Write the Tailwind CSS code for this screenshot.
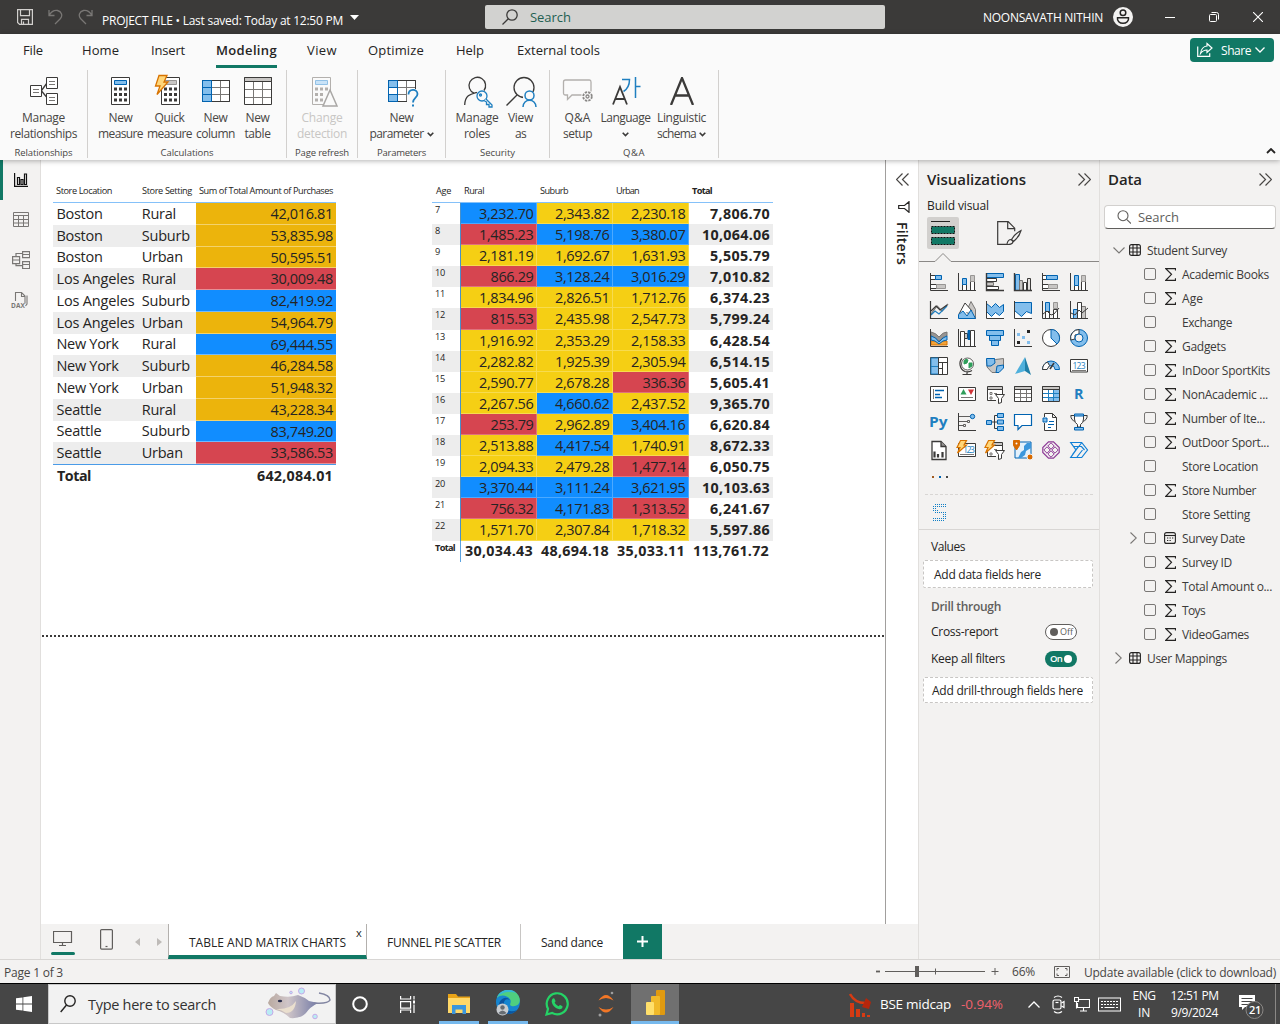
<!DOCTYPE html>
<html lang="en">
<head>
<meta charset="utf-8">
<title>PROJECT FILE</title>
<script src="https://cdn.jsdelivr.net/npm/@tailwindcss/browser@4"></script>
</head>
<body class="w-[1280px] h-[1024px] overflow-hidden flex flex-col bg-white font-['Open_Sans','Noto_Sans',sans-serif] text-[12px] leading-4 text-[#252423] whitespace-nowrap **:shrink-0">

<!-- Title bar -->
<header class="h-[34px] bg-[#3b3a39] flex items-center text-white">
  <svg class="ml-[17px] w-4 h-4" viewBox="0 0 16 16" fill="none" stroke="#d2d0ce" stroke-width="1.2"><path d="M.6.6h14.8v14.8H2.6l-2-2z"/><path d="M3.5.6v6h9v-6M4.500 15.400v-5h7v5M6.500 12.500v3"/></svg>
  <svg class="ml-[15px] w-[15px] h-4" viewBox="0 0 15 16" fill="none" stroke="#797775" stroke-width="1.300"><path d="M1 1v5.500h5.500M1 6.500C3 3 6 1 9.500 1.500c4 .8 5.500 5 3 8L7 15"/></svg>
  <svg class="ml-[15px] w-[15px] h-4" viewBox="0 0 15 16" fill="none" stroke="#797775" stroke-width="1.300"><path d="M14 1v5.500H8.500M14 6.500C12 3 9 1 5.500 1.500c-4 .8-5.500 5-3 8L8 15"/></svg>
  <span data-fit class="ml-[9px] w-[241px] pt-[7px]">PROJECT FILE • Last saved: Today at 12:50 PM</span>
  <svg class="ml-[7px] w-[9px] h-[5px]" viewBox="0 0 9 5"><path d="M0 0h9L4.500 5z" fill="#fff"/></svg>
  <div class="ml-[126px] w-[400px] h-6 bg-[#d2d2d0] rounded-[2px] flex items-center pl-[17px] text-[#1f6052]">
    <svg class="w-4 h-4" viewBox="0 0 16 16" fill="none" stroke="#3b3a39" stroke-width="1.300"><circle cx="10" cy="6" r="5.200"/><path d="M6.300 9.800.5 15.500"/></svg>
    <span data-fit class="ml-3 w-[41px] text-[13px]">Search</span>
  </div>
  <span data-fit class="ml-[98px] w-[120px] pt-px">NOONSAVATH NITHIN</span>
  <svg class="ml-[10px] w-5 h-5" viewBox="0 0 20 20"><circle cx="10" cy="10" r="10" fill="#f3f2f1"/><g fill="none" stroke="#252423" stroke-width="1.500"><circle cx="10" cy="5.700" r="2.800"/><path d="M4.500 10.800h11c.5 3-2 5.500-5.500 5.500s-6-2.500-5.500-5.500z"/></g></svg>
  <svg class="ml-8 w-[10px] h-[10px]" viewBox="0 0 10 10"><path d="M0 5.500h10" stroke="#fff"/></svg>
  <svg class="ml-[34px] w-[10px] h-[10px]" viewBox="0 0 10 10" fill="none" stroke="#fff"><rect x=".5" y="2.500" width="7" height="7" rx="1"/><path d="M2.500.5h5q2 0 2 2v5"/></svg>
  <svg class="ml-[34px] w-[10px] h-[10px]" viewBox="0 0 10 10" stroke="#fff" stroke-width="1.100"><path d="M0 0l10 10M10 0 0 10"/></svg>
</header>

<!-- Ribbon -->
<section class="relative z-10 h-[126px] bg-[#fafafa] flex flex-col shadow-[0_1px_5px_rgba(0,0,0,0.3)]">
  <nav class="h-[34px] pb-[2px] flex items-center text-[13px] text-[#252423]">
    <span data-fit class="ml-[23px] w-[20px]">File</span>
    <span data-fit class="ml-[39px] w-[37px]">Home</span>
    <span data-fit class="ml-[32px] w-[34px]">Insert</span>
    <span class="ml-[31px] w-[61px] h-[31px] mt-[5px] pt-[3px] border-b-[3px] border-[#117865] font-semibold"><span data-fit class="block w-[61px] leading-5">Modeling</span></span>
    <span data-fit class="ml-[30px] w-[30px]">View</span>
    <span data-fit class="ml-[31px] w-[56px]">Optimize</span>
    <span data-fit class="ml-[32px] w-[28px]">Help</span>
    <span data-fit class="ml-[33px] w-[83px]">External tools</span>
    <div class="ml-[590px] w-[84px] h-6 rounded-[4px] bg-[#117865] text-white text-[12px] flex items-center font-medium">
      <svg class="ml-[7px] w-4 h-4" viewBox="0 0 16 16" fill="none" stroke="#fff" stroke-width="1.200"><path d="M.7 4.500v9.800h12v-3"/><path d="M10 1.500l5 4.500-5 4.500V8c-3.500 0-5 1.500-6.500 3.500C4 7.500 6.500 4.200 10 4z"/></svg>
      <span data-fit class="ml-2 w-[30px] pt-px">Share</span>
      <svg class="ml-1 w-[10px] h-[6px]" viewBox="0 0 10 6" fill="none" stroke="#fff" stroke-width="1.300"><path d="M.5.5 5 5 9.500.5"/></svg>
    </div>
  </nav>
  <div class="flex h-[90px] pt-[2px] text-[#484644]">
    <div class="w-[88px] h-[88px] border-r border-[#d2d0ce] flex flex-col items-center">
      <div class="h-[75px] pt-[7px] flex flex-col items-center">
        <svg class="w-7 h-7 mb-[5px]" viewBox="0 0 28 28" fill="#fff" stroke="#3b3a39"><path d="M11.500 13.500 17 6M11.500 14l5.500 6.500" stroke-width="1.300"/><path d="M.5 8.500h11v11H.5zM16.500.5h11v11h-11zM16.500 16.500h11v11h-11z"/><path d="M3 12.500h6M3 15.500h6M19 4.500h6M19 7.500h6M19 20.500h6M19 23.500h6" stroke="#797775"/></svg>
        <span data-fit class="w-[43px]">Manage</span><span data-fit class="w-[67px]">relationships</span>
      </div>
      <span data-fit class="w-[58px] text-[9.500px] leading-4">Relationships</span>
    </div>
    <div class="w-[199px] h-[88px] border-r border-[#d2d0ce] flex flex-col items-center">
      <div class="h-[75px] w-[199px] pl-[9px] pt-[7px] flex gap-[1px]">
        <div class="w-12 flex flex-col items-center">
          <svg class="w-7 h-7 mb-[5px]" viewBox="0 0 28 28" fill="none" stroke="#3b3a39"><path d="M4.500.5h18v27h-18z" fill="#fff"/><path d="M7.500 3.500h12v4h-12z" fill="#83beec" stroke="#0063b1"/><g stroke-width="3" stroke-dasharray="3 2"><path d="M7 12h13M7 17.500h13M7 23h13"/></g></svg>
          <span data-fit class="w-[24px]">New</span><span data-fit class="w-[45px]">measure</span>
        </div>
        <div class="w-12 flex flex-col items-center">
          <svg class="w-7 h-7 mb-[5px] overflow-visible" viewBox="0 0 28 28" fill="none" stroke="#3b3a39"><path d="M5.500.5h18v27h-18z" fill="#fff"/><path d="M8.500 3.500h12v4h-12z" fill="#c8c6c4" stroke="#979593"/><g stroke-width="3" stroke-dasharray="3 2"><path d="M8 12h13M8 17.500h13M8 23h13"/></g><path d="M3-1.500h8L8 5h4L1 17.500 4 9H-.5z" fill="#ffd679" stroke="#d87300" stroke-width="1.300"/></svg>
          <span data-fit class="w-[30px]">Quick</span><span data-fit class="w-[45px]">measure</span>
        </div>
        <div class="w-[42px] flex flex-col items-center">
          <svg class="w-7 h-7 mb-[5px]" viewBox="0 0 28 28" fill="none" stroke="#3b3a39"><path d="M.5 3.500h27v21H.5z" fill="#fff"/><path d="M.5 3.500h9v21h-9z" fill="#83beec"/><path d="M9.500 10.500h18M9.500 17.500h18M18.500 4v20" stroke="#797775"/><path d="M.5 3.500h9v21h-9zM.5 10.500h9M.5 17.500h9" stroke="#0063b1"/><path d="M10 3.500h17.500v21H10"/></svg>
          <span data-fit class="w-[24px]">New</span><span data-fit class="w-[39px]">column</span>
        </div>
        <div class="w-10 flex flex-col items-center">
          <svg class="w-7 h-7 mb-[5px]" viewBox="0 0 28 28" fill="none" stroke="#3b3a39"><path d="M.5.500h27v27H.5z" fill="#fff"/><path d="M.5.500h27v4H.5z" fill="#c8c6c4"/><path d="M1 12.500h26M1 20.500h26M9.500 5v22M18.500 5v22" stroke="#797775"/></svg>
          <span data-fit class="w-[24px]">New</span><span data-fit class="w-[26px]">table</span>
        </div>
      </div>
      <span data-fit class="w-[53px] text-[9.500px]">Calculations</span>
    </div>
    <div class="w-[71px] h-[88px] border-r border-[#d2d0ce] flex flex-col items-center">
      <div class="h-[75px] pt-[7px] flex flex-col items-center text-[#c8c6c4]">
        <svg class="w-7 h-7 mb-[5px] overflow-visible" viewBox="0 0 28 28" fill="none" stroke="#b3b0ad"><path d="M4.500.5h18v27h-18z" fill="#fafafa"/><path d="M7.500 3.500h12v4h-12z" fill="#c9e3f8" stroke="#92c1e6"/><g stroke-width="3" stroke-dasharray="3 2"><path d="M7 12h13M7 17.500h9M7 23h8"/></g><path d="M22 13l7 16H15z" fill="#fafafa" stroke="#a9a7a5" stroke-width="1.500"/></svg>
        <span data-fit class="w-[41px]">Change</span><span data-fit class="w-[50px]">detection</span>
      </div>
      <span data-fit class="w-[54px] text-[9.500px]">Page refresh</span>
    </div>
    <div class="w-[88px] h-[88px] border-r border-[#d2d0ce] flex flex-col items-center">
      <div class="h-[75px] pt-[7px] flex flex-col items-center">
        <svg class="w-7 h-7 mb-[5px] overflow-visible" viewBox="0 0 28 28" fill="none" stroke="#3b3a39"><path d="M.5 3.500h27v21H.5z" fill="#fff"/><path d="M.5 3.500h9v7h-9zM.5 17.500h9v7h-9z" fill="#83beec"/><path d="M9.500 10.500h18M9.500 17.500h18M18.500 4v20" stroke="#797775"/><path d="M.5 3.500h9v21h-9zM.5 10.500h9M.5 17.500h9" stroke="#0063b1"/><path d="M10 3.500h17.500v21H10"/><path d="M19 12h11v18H19z" fill="#fafafa" stroke="none"/><path d="M20.500 17.500c0-6 9-6 9-.5 0 4-4.500 4-4.500 8.500" stroke="#1f7fc0" stroke-width="1.800"/><path d="M24 27.500h2v2h-2z" fill="#1f7fc0" stroke="none"/></svg>
        <span data-fit class="w-[24px]">New</span>
        <span class="flex items-center"><span data-fit class="w-[54px]">parameter</span><svg class="ml-[3px] w-[7px] h-[5px]" viewBox="0 0 7 5" fill="none" stroke="#3b3a39" stroke-width="1.600"><path d="M.7.7l2.800 2.800L6.300.7"/></svg></span>
      </div>
      <span data-fit class="w-[49px] text-[9.500px]">Parameters</span>
    </div>
    <div class="w-[104px] h-[88px] border-r border-[#d2d0ce] flex flex-col items-center">
      <div class="h-[75px] w-[104px] pl-[9px] pt-[7px] flex">
        <div class="w-[45px] flex flex-col items-center">
          <svg class="w-7 h-7 mb-[5px] overflow-visible" viewBox="0 0 28 28" fill="none" stroke="#3b3a39" stroke-width="1.300"><path d="M14 15.300C8 17 2 18 1.700 28M21 13.500a8.300 8.300 0 1 0-10 2.700"/><g stroke="#1f7fc0"><circle cx="19" cy="19" r="5"/><path d="M23 22l6 6v2h-3v-2.500h-2.500V25L21 23.500" fill="#fafafa"/><circle cx="17.500" cy="18" r="1" /></g></svg>
          <span data-fit class="w-[43px]">Manage</span><span data-fit class="w-[26px]">roles</span>
        </div>
        <div class="w-[42px] flex flex-col items-center">
          <svg class="w-8 h-7 mb-[5px] overflow-visible" viewBox="0 0 32 28" fill="none" stroke="#3b3a39" stroke-width="1.300"><circle cx="19" cy="10.500" r="10"/><path d="M12 18 1.500 28.500"/><path d="M18 15h13v15H18z" fill="#fafafa" stroke="none"/><g stroke="#1f7fc0" stroke-width="1.500"><circle cx="24.500" cy="18.500" r="4.500"/><path d="M18 30c0-9 13-9 13 0"/></g></svg>
          <span data-fit class="w-[25px]">View</span><span data-fit class="w-[11px]">as</span>
        </div>
      </div>
      <span data-fit class="w-[35px] text-[9.500px]">Security</span>
    </div>
    <div class="w-[169px] h-[88px] border-r border-[#d2d0ce] flex flex-col items-center">
      <div class="h-[75px] w-[169px] pl-[12px] pt-[7px] flex">
        <div class="w-8 flex flex-col items-center">
          <svg class="w-7 h-7 mb-[5px] overflow-visible" viewBox="0 0 28 28" fill="none" stroke="#b3b0ad" stroke-width="1.300"><path d="M17.500 18H8l-4.500 4.500V18h-2q-2 0-2-2V5q0-2 2-2h24q1.500 0 1.500 2v9.500"/><circle cx="23.500" cy="19.500" r="4.300" stroke="#8a8886" stroke-width="1.800" stroke-dasharray="2.400 1"/><circle cx="23.500" cy="19.500" r="1.500" stroke="#8a8886"/></svg>
          <span data-fit class="w-[26px]">Q&amp;A</span><span data-fit class="w-[29px]">setup</span>
        </div>
        <div class="ml-[7px] w-[50px] flex flex-col items-center">
          <svg class="w-7 h-7 mb-[5px] overflow-visible" viewBox="0 0 28 28" fill="none" stroke="#3b3a39" stroke-width="1.800"><path d="M1 27.500 8 10l7 17.500M3.300 22h9.400"/><path d="M10 2.500h7.500c0 6-2 9.500-6 12M23.500 0v21M24 9.500h4.500" stroke="#1f7fc0" stroke-width="1.500"/></svg>
          <span data-fit class="w-[50px]">Language</span>
          <svg class="mt-[6px] w-[7px] h-[5px]" viewBox="0 0 7 5" fill="none" stroke="#3b3a39" stroke-width="1.600"><path d="M.7.7l2.800 2.800L6.300.7"/></svg>
        </div>
        <div class="ml-[6px] w-[50px] flex flex-col items-center">
          <svg class="w-7 h-7 mb-[5px]" viewBox="0 0 28 28" fill="none" stroke="#3b3a39" stroke-width="2.300"><path d="M3 28 14 1l11 27M7 18.500h14"/></svg>
          <span data-fit class="w-[49px]">Linguistic</span>
          <span class="flex items-center"><span data-fit class="w-[39px]">schema</span><svg class="ml-[3px] w-[7px] h-[5px]" viewBox="0 0 7 5" fill="none" stroke="#3b3a39" stroke-width="1.600"><path d="M.7.7l2.800 2.800L6.300.7"/></svg></span>
        </div>
      </div>
      <span data-fit class="w-[22px] text-[9.500px]">Q&amp;A</span>
    </div>
    <svg class="ml-[547px] mt-[78px] w-[10px] h-[6px]" viewBox="0 0 10 6" fill="none" stroke="#252423" stroke-width="1.800"><path d="M1 5l4-4 4 4"/></svg>
  </div>
</section>

<main class="h-[799px] flex">
  <!-- View switcher -->
  <aside class="w-[41px] bg-[#f3f2f1] border-r border-[#e1dfdd] flex flex-col">
    <div class="h-10 border-l-[3px] border-[#117865] pl-[11px] pt-[13px]"><svg class="w-[14px] h-[14px]" viewBox="0 0 14 14" fill="none" stroke="#111" stroke-width="1.200"><path d="M.6 0v13.400H14M3.500 4.500h2v7h-2zM7 6.500h2v5H7zM10.500 1h2v10.500h-2z"/></svg></div>
    <svg class="ml-[13px] mt-[12px] w-4 h-4" viewBox="0 0 16 16" fill="none" stroke="#797775"><path d="M.5.5h15v14H.5zM.5 3.500h15M.5 7.500h15M.5 11h15M5.500 3.500v11M10.500 3.500v11"/></svg>
    <svg class="ml-3 mt-[23px] w-[18px] h-[18px]" viewBox="0 0 18 18" fill="none" stroke="#797775" stroke-width="1.200"><path d="M.6 5.600h7v7h-7zM.6 9h7M10.600.6h7v6h-7zM10.600 3.500h7M10.600 10.600h7v7h-7zM10.600 13.500h7M4 5.600V2.500h6.500M4 12.600v2h6.500"/></svg>
    <div class="ml-[11px] mt-[23px] w-[18px] h-[17px] grid text-[6.500px] leading-[6px] font-bold text-[#797775]">
      <svg class="col-start-1 row-start-1 ml-[3px] w-[14px] h-[15px]" viewBox="0 0 14 15" fill="none" stroke="#797775" stroke-width="1.100"><path d="M1.500 9V.5h6l3.500 3.500v7.500M7.500.5v4H11M13 3.500V12l-1.500 2"/></svg>
      <span data-fit class="col-start-1 row-start-1 self-end w-[14px]">DAX</span>
    </div>
  </aside>

  <div class="w-[877px] flex flex-col">
    <div class="h-[764px] flex bg-white">
      <!-- Report canvas -->
      <div class="w-[844px]">
        <div class="mx-px h-[477px] border-b-2 border-dotted border-[#3b3a39] pl-[11px] pt-5 flex items-start">
          <div class="w-[284px]">
            <div class="h-[23px] w-[283px] border-b border-[#85c1f9] flex items-center text-[9.200px] text-[#252423]">
              <span data-fit class="ml-[3px] w-[56px]">Store Location</span><span data-fit class="ml-[30px] w-[50px]">Store Setting</span><span data-fit class="ml-[7px] w-[134px]">Sum of Total Amount of Purchases</span>
            </div>
            <div id="purchases" class="w-[283px] text-[14.500px] leading-5"></div>
            <div class="h-[22px] w-[283px] border-t border-[#4a9be8] flex items-center justify-between pl-1 pr-[3px] font-bold text-[14.300px]"><span data-fit class="w-[34px]">Total</span><span data-fit class="w-[76px]">642,084.01</span></div>
          </div>
          <div class="ml-[95px] w-[341px]">
            <div class="h-[23px] border-b border-[#85c1f9] flex items-center text-[9.200px]">
              <span data-fit class="ml-[4px] w-[15px]">Age</span><span data-fit class="ml-[13px] w-[20px]">Rural</span><span data-fit class="ml-[56px] w-[28px]">Suburb</span><span data-fit class="ml-[48px] w-[23px]">Urban</span><span data-fit class="ml-[53px] w-[20px] font-bold">Total</span>
            </div>
            <div id="matrix" class="text-[14.500px] leading-5"></div>
            <div class="h-[21px] flex font-bold text-[14.300px]">
              <span class="w-[28.500px] pl-[3px] border-r border-[#5aa3e0] text-[9.200px] leading-[14px]"><span data-fit class="block w-[20px]">Total</span></span>
              <span data-fit class="ml-[4.500px] mt-[2px] w-[68px]">30,034.43</span><span data-fit class="ml-[8px] mt-[2px] w-[68px]">48,694.18</span><span data-fit class="ml-[8px] mt-[2px] w-[68px]">35,033.11</span><span data-fit class="ml-[8px] mt-[2px] w-[76px]">113,761.72</span>
            </div>
          </div>
        </div>
      </div>
      <!-- Filters (collapsed) -->
      <div class="w-[33px] border-l border-[#a19f9d] flex flex-col">
        <svg class="ml-[10px] mt-[13px] w-[13px] h-[13px]" viewBox="0 0 13 13" fill="none" stroke="#484644" stroke-width="1.200"><path d="M6.500.5l-6 6 6 6M12.500.5l-6 6 6 6"/></svg>
        <svg class="ml-3 mt-[15px] w-3 h-3" viewBox="0 0 12 12" fill="none" stroke="#252423" stroke-width="1.200"><path d="M11 .7v10.600L6.500 7.500H.7v-3h5.800z"/></svg>
        <div class="ml-[6px] mt-[9px] w-5 [writing-mode:vertical-rl] text-[14px] leading-5 font-semibold tracking-[0.200px]">Filters</div>
      </div>
    </div>
    <!-- Page tabs -->
    <div class="h-[35px] bg-[#f3f2f1] flex items-center">
      <div class="ml-[10px] w-6 h-[35px] flex flex-col items-center">
        <svg class="mt-[7px] w-[20px] h-[15px]" viewBox="0 0 20 15" fill="none" stroke="#605e5c"><path d="M.5.500h18v11H.5zM9.500 12v2.500M6 14.500h7" stroke-width="1.200"/></svg>
        <div class="mt-[6px] w-6 h-[3px] bg-[#117865] rounded-sm"></div>
      </div>
      <svg class="ml-[25px] mt-[-5px] w-[13px] h-[21px]" viewBox="0 0 13 21" fill="none" stroke="#605e5c" stroke-width="1.200"><rect x=".6" y=".6" width="11.800" height="19.500" rx="1"/><path d="M5.500 17.500h2"/></svg>
      <svg class="ml-[22px] w-[5px] h-2" viewBox="0 0 5 8"><path d="M5 0v8L0 4z" fill="#bebbb8"/></svg>
      <svg class="ml-[17px] w-[5px] h-2" viewBox="0 0 5 8"><path d="M0 0v8l5-4z" fill="#bebbb8"/></svg>
      <div class="ml-[6px] w-[199px] h-[35px] bg-white border-x border-[#b3b0ad] border-b-[4px] border-b-[#117865] flex pl-5"><span data-fit class="mt-[11px] w-[157px] font-medium">TABLE AND MATRIX CHARTS</span><span class="ml-[10px] mt-[1px] text-[11px] font-medium">x</span></div>
      <div class="w-[154px] h-[35px] bg-white border-r border-[#c8c6c4] flex items-center pl-5"><span data-fit class="mt-[2px] w-[114px]">FUNNEL PIE SCATTER</span></div>
      <div class="w-[102px] h-[35px] bg-white flex items-center pl-5"><span data-fit class="mt-[2px] w-[62px]">Sand dance</span></div>
      <div class="w-[39px] h-[35px] bg-[#117865] flex items-center justify-center"><svg class="w-[11px] h-[11px]" viewBox="0 0 11 11" stroke="#fff" stroke-width="2"><path d="M5.500 0v11M0 5.500h11"/></svg></div>
    </div>
  </div>

  <!-- Visualizations pane -->
  <aside class="w-[181px] border-l border-[#e1dfdd] bg-[#f3f2f1] flex flex-col">
    <div class="mt-[9px] h-5 flex items-center"><span data-fit class="ml-2 w-[99px] text-[15px] leading-5 font-semibold">Visualizations</span><svg class="ml-[52px] w-[13px] h-[13px]" viewBox="0 0 13 13" fill="none" stroke="#484644" stroke-width="1.200"><path d="M.5.500l6 6-6 6M6.500.500l6 6-6 6"/></svg></div>
    <span data-fit class="ml-2 mt-[9px] w-[62px] font-medium">Build visual</span>
    <div class="mt-[3px] h-8 flex">
      <div class="ml-2 w-8 h-8 bg-[#d2d0ce] rounded-[2px] pl-1 pt-1"><svg class="w-6 h-6" viewBox="0 0 24 24" fill="#117865"><path d="M0 .5h19" stroke="#252423"/><g stroke="#111" stroke-dasharray="2 1"><path d="M.5 5.500h23v7H.5zM.5 16.500h23v7H.5z"/></g></svg></div>
      <svg class="ml-[38px] mt-1 w-[25px] h-6" viewBox="0 0 25 24" fill="none" stroke="#3b3a39" stroke-width="1.200"><path d="M8 23.300H.7V.7h10.500l6.500 6.500v3M10.700.7v7h7"/><path d="M24 9.500c-4 2-8 6.500-9.500 9l2 2c3-2.500 6.500-7 7.500-11zM14 18.500c-3 0-3.500 2-4 4.500-1 .5-1.500.3-2 .3 4 .7 8 0 8-3z"/></svg>
    </div>
    <svg class="mt-[3px] w-[180px] h-[11px]" viewBox="0 0 180 11" fill="none" stroke="#8a8886"><path d="M0 9.500h16l8-8 8 8h148"/></svg>

    <div class="ml-[11px] mt-[10px] grid grid-cols-[repeat(6,18px)] gap-[10px] *:w-[18px] *:h-[18px] *:overflow-visible">
      <!-- row 1 -->
      <svg viewBox="0 0 18 18" fill="#fff" stroke="#3b3a39"><path d="M.5 2.500h5v4h-5zM.5 11.500h6v4h-6z"/><path d="M5.500 2.500h6v4h-6z" fill="#83beec" stroke="#0063b1"/><path d="M6.500 11.500h9v4h-9z" fill="#c8c6c4" stroke="#979593"/><path d="M.5 0v17.500H18" fill="none"/></svg>
      <svg viewBox="0 0 18 18" fill="#fff" stroke="#3b3a39"><path d="M4.500 11.500h4v6h-4zM12.500 8.500h4v9h-4z"/><path d="M4.500 5.500h4v6h-4z" fill="#83beec" stroke="#0063b1"/><path d="M12.500 2.500h4v6h-4z" fill="#c8c6c4" stroke="#979593"/><path d="M.5 0v17.500H18" fill="none"/></svg>
      <svg viewBox="0 0 18 18" fill="#fff" stroke="#3b3a39"><path d="M.5.500h17v4H.5z" fill="#83beec" stroke="#0063b1"/><path d="M.5 5.500h10v3H.5z"/><path d="M.5 9.500h7v3h-7z" fill="#c8c6c4" stroke="#797775"/><path d="M.5 13.500h12v3H.5z"/><path d="M.5 0v17.500H18" fill="none" stroke-width="1.400"/></svg>
      <svg viewBox="0 0 18 18" fill="#fff" stroke="#3b3a39"><path d="M1.500 1.500h4v16h-4z" fill="#83beec" stroke="#0063b1"/><path d="M5.500 7.500h3v10h-3z" fill="#c8c6c4" stroke="#797775"/><path d="M9.500 9.500h3v8h-3z"/><path d="M13.500 5.500h3v12h-3z" fill="#e1dfdd"/><path d="M.5 0v17.500H18" fill="none" stroke-width="1.400"/></svg>
      <svg viewBox="0 0 18 18" fill="#fff" stroke="#3b3a39"><path d="M.5 2.500h4v4h-4zM.5 11.500h6v4h-6z"/><path d="M4.500 2.500h11v4h-11z" fill="#83beec" stroke="#0063b1"/><path d="M6.500 11.500h9v4h-9z" fill="#c8c6c4" stroke="#979593"/><path d="M.5 0v17.500H18" fill="none"/></svg>
      <svg viewBox="0 0 18 18" fill="#fff" stroke="#3b3a39"><path d="M4.500 12.500h4v5h-4zM11.500 8.500h4v9h-4z"/><path d="M4.500 2.500h4v10h-4z" fill="#83beec" stroke="#0063b1"/><path d="M11.500 2.500h4v6h-4z" fill="#c8c6c4" stroke="#979593"/><path d="M.5 0v17.500H18" fill="none"/></svg>
      <!-- row 2 -->
      <svg viewBox="0 0 18 18" fill="none" stroke="#3b3a39" stroke-width="1.200"><path d="M1 13 7 5l5 5 6-7" stroke="#797775"/><path d="M1 14l4-4 4 3 8-8" stroke="#1f7fc0"/><path d="M1 10l5-5 4 4 7-5"/><path d="M.5 0v17.500H18"/></svg>
      <svg viewBox="0 0 18 18" fill="#fff" stroke="#797775"><path d="M8 11 13 .5l4.500 8v9z" fill="#c8c6c4"/><path d="M1 13 7 2l7 8" stroke="#3b3a39"/><path d="M.5 17.500v-4L5 10l4 5 4-6 4.500 8.500z" fill="#83beec" stroke="#0063b1"/></svg>
      <svg viewBox="0 0 18 18" fill="#83beec" stroke="#0063b1"><path d="M.5 12v5.500h17V12l-4 3-4-3-4 4z" fill="#fff" stroke="none"/><path d="M.5 2.500l5 4 4-4 4 4 4-3v7l-4 4-4-3-4 4-5-5z"/><path d="M.5 0v17.500H18" fill="none" stroke="#3b3a39"/></svg>
      <svg viewBox="0 0 18 18" stroke="#0063b1"><path d="M1 10v7h16v-6l-4 2-5 3z" fill="#fff" stroke="none"/><path d="M.5 1.500h17v11l-5-2-5 5-7-6z" fill="#83beec"/><path d="M.5 0v17.500H18" fill="none" stroke="#3b3a39"/></svg>
      <svg viewBox="0 0 18 18" fill="#fff" stroke="#3b3a39"><path d="M3.500 1.500h4v10h-4z" fill="#83beec" stroke="#0063b1"/><path d="M3.500 10.500h4v7h-4zM11.500 8.500h4v9h-4z"/><path d="M11.500 1.500h4v6h-4z" fill="#c8c6c4" stroke="#979593"/><path d="M.5 0v17.500H18M1 13l4-3 4 4 3-1 5-6" fill="none"/></svg>
      <svg viewBox="0 0 18 18" fill="#fff" stroke="#3b3a39"><path d="M3.500 8.500h4v9h-4z" fill="#83beec" stroke="#0063b1"/><path d="M11.500 5.500h4v12h-4z" fill="#c8c6c4" stroke="#797775"/><path d="M7.500 1.500h4v16h-4z"/><path d="M.5 0v17.500H18M1 12l4 2 4-5 3 3 6-5" fill="none"/></svg>
      <!-- row 3 -->
      <svg viewBox="0 0 18 18" fill="none" stroke="#797775"><path d="M1 3q5 1 8 5 4-5 8-5v4q-4 0-8 5-4-4-8-5z" fill="#979593"/><path d="M1 12h5l3 3 3-3h5v4H1z" fill="#f2a33a" stroke="#d87300"/><path d="M1 7q5 1 8 6 4-5 8-6v4q-4 0-8 4-4-4-8-4z" fill="#83beec" stroke="#0063b1"/><path d="M.5 0v17.500H18" stroke="#3b3a39"/></svg>
      <svg viewBox="0 0 18 18" fill="#fff" stroke="#3b3a39"><path d="M2.500 2.500h4v15h-4z"/><path d="M6.500 4.500h3v5h-3z" fill="#c8c6c4"/><path d="M10 1.500h2v9h-2z" fill="#0063b1" stroke="#0063b1"/><path d="M12.500 1.500h4v16h-4z"/><path d="M.5 0v17.500H18" fill="none"/></svg>
      <svg viewBox="0 0 18 18" fill="#83beec" stroke="#0063b1"><path d="M.5 1.500h17v5H.5zM3.500 6.500h11v5h-11zM5.500 11.500h7v5h-7z"/></svg>
      <svg viewBox="0 0 18 18"><path d="M3 4h3v3H3zM8 7h3v3H8zM13 12h3v3h-3z" fill="#83beec"/><path d="M13 1h3v3h-3zM3 12h3v3H3z" fill="#252423"/><path d="M.5 0v17.500H18" fill="none" stroke="#3b3a39"/></svg>
      <svg viewBox="0 0 18 18" fill="#fff" stroke="#3b3a39"><circle cx="9" cy="9" r="8.500"/><path d="M9 .5V9l6 6A8.500 8.500 0 0 0 9 .5z" fill="#83beec" stroke="#0063b1"/></svg>
      <svg viewBox="0 0 18 18" stroke="#0063b1"><circle cx="9" cy="9" r="8.500" fill="#83beec"/><path d="M9 .5A8.500 8.500 0 0 0 .8 11L5 10V6l4-1z" fill="#fff" stroke="#3b3a39"/><circle cx="9" cy="9" r="4" fill="#f3f2f1"/></svg>
      <!-- row 4 -->
      <svg viewBox="0 0 18 18" fill="#fff" stroke="#3b3a39"><path d="M.5.5h17v17H.5z"/><path d="M1 1h7.500v16H1z" fill="#83beec" stroke="#1f7fc0"/><path d="M1 9.500h7" stroke="#1f7fc0"/><path d="M8.500 1v16M8.500 5.500h9M12.500 5.500v12M8.500 11.500h4" fill="none"/></svg>
      <svg viewBox="0 0 18 18" fill="#fff" stroke="#3b3a39"><circle cx="9.500" cy="7" r="6" stroke="#605e5c"/><path d="M6 4q2-3 4-1l-1 3-3 1zM11 6h3v3l-3 2z" fill="#2f9e5a" stroke="#2f9e5a"/><path d="M4 1.500C.5 5 1.500 12 7 14.500q4 1 7-1M9 14.500v3M4.500 17.500h9" fill="none" stroke-width="1.200"/></svg>
      <svg viewBox="0 0 18 18" fill="#c8c6c4" stroke="#797775"><path d="M.5 2.500l7-1 2 1 8-1v8l-5 6H6L1 10z"/><path d="M.5 1.500h8L9 6l-4 3H1zM11 9l6.500-1v3L13 15.500h-3z" fill="#83beec" stroke="#0063b1"/></svg>
      <svg viewBox="0 0 18 18"><path d="M11 0 1 17l10-3z" fill="#4fb0dc"/><path d="M11 0l6 18-6-4z" fill="#1f7fa8"/></svg>
      <svg viewBox="0 0 18 18" fill="#83beec" stroke="#0063b1"><path d="M.5 12.500a8.500 8.500 0 0 1 17 0h-4.500a4 4 0 0 0-8 0z"/><path d="M.5 12.500A8.500 8.500 0 0 1 5.500 5l2 3.500-2.500 4z" fill="#fff" stroke="#3b3a39"/><path d="M8 12l4-6" stroke="#3b3a39" stroke-width="1.500"/></svg>
      <svg viewBox="0 0 18 18" fill="#fff" stroke="#3b3a39"><path d="M.5 2.500h17v12.500H.5z"/><path d="M2 13.500h14" stroke="#797775"/><text x="2.500" y="11.500" font-size="8.500" fill="#1f7fc0" stroke="none" textLength="13">123</text></svg>
      <!-- row 5 -->
      <svg viewBox="0 0 18 18" fill="#fff" stroke="#3b3a39"><path d="M.5 1.500h17v15H.5z"/><path d="M3.500 4v10" stroke="#797775"/><path d="M5 5.500h9M5 12.500h7" stroke="#0063b1" stroke-width="1.500"/><path d="M5 9.500h5" stroke="#0063b1" stroke-width="1.500"/></svg>
      <svg viewBox="0 0 18 18" fill="#fff" stroke="#3b3a39"><path d="M.5 2.500h17v13H.5z"/><path d="M2.500 9.500 5.500 4l3 5.500z" fill="#2f9e5a" stroke="none"/><path d="M10 4.500h6L13 10z" fill="#d13438" stroke="none"/><path d="M3 12.500h12" stroke="#797775"/></svg>
      <svg viewBox="0 0 18 18" fill="#fff" stroke="#3b3a39"><path d="M10 15.500H1.500v-13h15V9"/><path d="M1.500 1.500h15v3h-15z" fill="#c8c6c4"/><path d="M4 7.500h2v2H4zM4 12h2v2H4zM8 8.500h3" stroke="#797775"/><path d="M9.500 9.500h9l-3 4v4l-3 1v-5z"/></svg>
      <svg viewBox="0 0 18 18" fill="#fff" stroke="#3b3a39"><path d="M.5 1.500h17v15H.5z"/><path d="M.5 1.500h17v3H.5z" fill="#c8c6c4"/><path d="M1 8.500h16M1 12.500h16M6.500 5v11M12.500 5v11" stroke="#797775"/></svg>
      <svg viewBox="0 0 18 18" fill="#fff" stroke="#3b3a39"><path d="M.5 1.500h17v15H.5z"/><path d="M.5 1.500h17v3H.5z" fill="#c8c6c4"/><path d="M12 5h5v11H6.500v-3.500H12z" fill="#83beec" stroke="none"/><path d="M1 8.500h16M1 12.500h16M6.500 5v11M11.500 5v11" stroke="#1f7fc0"/></svg>
      <svg viewBox="0 0 18 18"><text x="4" y="14" font-size="14" font-weight="700" fill="#1f7fc0" textLength="9.500" lengthAdjust="spacingAndGlyphs">R</text></svg>
      <!-- row 6 -->
      <svg viewBox="0 0 18 18"><text x="-1" y="14" font-size="15" font-weight="700" fill="#1f7fc0" textLength="18.500" lengthAdjust="spacingAndGlyphs">Py</text></svg>
      <svg viewBox="0 0 18 18" fill="#f3f2f1" stroke="#605e5c"><path d="M.5 0v17.500H18" fill="none" stroke="#3b3a39"/><path d="M1 3.500h11M1 8.500h9M1 12.500h5" /><circle cx="14.500" cy="3.500" r="2.200" fill="#83beec" stroke="#0063b1"/><path d="M9.500 7.500h2v2h-2zM5.500 11.500h2v2h-2z"/></svg>
      <svg viewBox="0 0 18 18" fill="#83beec" stroke="#0063b1"><path d="M5 9h6M11.500 2.500H8.500v13h3" fill="none" stroke="#3b3a39"/><path d="M.5 7.500h5v4h-5zM11.500.500h6v4h-6zM11.500 7h6v4h-6zM11.500 13.500h6v4h-6z"/></svg>
      <svg viewBox="0 0 18 18" fill="#fff" stroke="#0063b1"><path d="M.5 1.500h17v11H8l-4 4v-4H.5z" stroke-width="1.200"/></svg>
      <svg viewBox="0 0 18 18" fill="#fff" stroke="#3b3a39"><path d="M2.500 4V.500h8l4 4v13h-12V10M10.500.500v4h4"/><path d="M1 5h4v4H1z" fill="#83beec" stroke="#0063b1"/><path d="M7 8.500h5M6 11.500h6M6 14.500h3" stroke="#0063b1"/></svg>
      <svg viewBox="0 0 18 18" fill="#fff" stroke="#3b3a39"><path d="M4.500 2.500H.8q0 5 5 6M13.500 2.500h3.700q0 5-5 6" fill="none"/><path d="M4.500 1.500h9V6q0 4-3 5.500V14h-3v-2.500q-3-1.500-3-5.500z"/><path d="M4.500 1h9v2h-9zM4.500 14.500h9v2.500h-9z" fill="#83beec" stroke="#0063b1"/></svg>
      <!-- row 7 -->
      <svg viewBox="0 0 18 18" fill="#fff" stroke="#3b3a39" stroke-width="1.300"><path d="M2 .5h9l5 5v13H2z"/><path d="M11 .5v5h5" fill="#979593"/><path d="M4.500 10.500v6M8 13v3.500M12.500 11v5.500" stroke-width="2.200"/></svg>
      <svg viewBox="0 0 18 18" fill="#fff" stroke="#3b3a39"><path d="M.5 2.500h17v13H.5z"/><path d="M2 13.500h14" stroke="#797775"/><text x="5" y="12" font-size="9" fill="#1f7fc0" stroke="none" textLength="12">123</text><path d="M2.500-.5h6L6 4h2.500L-.5 12 2 6.500h-3z" fill="#ffd679" stroke="#d87300" stroke-width="1.200"/></svg>
      <svg viewBox="0 0 18 18" fill="#fff" stroke="#3b3a39"><path d="M10 15.500H1.500v-13h15V9"/><path d="M1.500 1.500h15v3h-15z" fill="#c8c6c4"/><path d="M4 12h2v2H4zM8 8.500h3" stroke="#797775"/><path d="M9.500 9.500h9l-3 4v4l-3 1v-5z"/><path d="M2.500-.5h6L6 4h2.500L-.5 12 2 6.500h-3z" fill="#ffd679" stroke="#d87300" stroke-width="1.200"/></svg>
      <svg viewBox="0 0 18 18" fill="#e4f1fb" stroke="#0063b1"><path d="M1 1h16v16H1z"/><path d="M17 2v5l-5 3-1 4-4 3H4l3-6 3-2V5l3-3z" fill="#3c97dc" stroke="none"/><path d="M-.5-.5h6v5L2.500 9l-3-4.500z" fill="#d86a00" stroke="#d86a00"/><circle cx="2.500" cy="2.500" r="1" fill="#fff" stroke="none"/><circle cx="16" cy="16" r="3" fill="#d86a00" stroke="#f3f2f1"/></svg>
      <svg viewBox="0 0 18 18" fill="#f3f2f1" stroke="#8e3a97" stroke-width="1.200"><path d="M6.500.800h5L17.200 6.500v5L11.500 17.200h-5L.8 11.500v-5z"/><path d="M9 1.800l3.200 3.200L9 8.200 5.800 5zM9 9.800l3.200 3.200L9 16.200 5.800 13zM5 5.800 8.200 9 5 12.200 1.800 9zM13 5.800 16.200 9 13 12.200 9.800 9z" stroke-width="1"/></svg>
      <svg viewBox="0 0 18 18" fill="none" stroke="#0f7fd6" stroke-width="1.200"><path d="M.7 1.500h11l5.800 7.500-5.800 7.500H.7L6 9zM3.500 5.500h8l3 3.500M6 9l5.500-7M2.500 13.500 8 6M7 16l5.500-7"/></svg>
    </div>
    <div class="mt-[17px] ml-[13px] flex gap-[5px]"><i class="w-[2px] h-[2px] bg-[#a05a20]"></i><i class="w-[2px] h-[2px] bg-[#0063b1]"></i><i class="w-[2px] h-[2px] bg-[#484644]"></i></div>
    <div class="mt-[16px] mx-[6px] border-t border-dashed border-[#d8d6d4]"></div>
    <svg class="ml-[14px] mt-[9px] w-[15px] h-[17px]" viewBox="0 0 15 17" fill="none" stroke="#0f7fc6" stroke-dasharray="1 1"><path d="M2 .500h12M0 2.500h14M0 4.500h4M0 6.500h5M2 8.500h11M10 10.500h4M10 12.500h4M0 14.500h14M0 16.500h12"/></svg>
    <div class="mt-[8px] border-t border-[#d8d6d4]"></div>
    <span data-fit class="ml-3 mt-[9px] w-[34px]">Values</span>
    <div class="mt-[5px] ml-1 w-[170px] h-[28px] border border-dashed border-[#c8c6c4] rounded-[2px] bg-white flex items-center pl-[10px]"><span data-fit class="w-[107px] pt-[2px]">Add data fields here</span></div>
    <span data-fit class="ml-3 mt-[11px] w-[70px] font-semibold text-[#605e5c]">Drill through</span>
    <div class="mt-[9px] h-4 flex items-center"><span data-fit class="ml-3 w-[67px]">Cross-report</span><span class="ml-[47px] w-8 h-4 rounded-full border border-[#605e5c] bg-white flex items-center pl-1 text-[9px] text-[#605e5c]"><i class="w-2 h-2 rounded-full bg-[#605e5c] mr-[2px]"></i><span data-fit class="w-[13px]">Off</span></span></div>
    <div class="mt-[11px] h-4 flex items-center"><span data-fit class="ml-3 w-[74px]">Keep all filters</span><span class="ml-[40px] w-8 h-4 rounded-full bg-[#117865] flex items-center pl-[5px] text-[9.500px] text-white font-semibold"><span data-fit class="w-[12px]">On</span><i class="ml-[2px] w-2 h-2 rounded-full bg-white"></i></span></div>
    <div class="mt-[10px] ml-1 w-[170px] h-[26px] border border-dashed border-[#c8c6c4] rounded-[2px] bg-white flex items-center pl-[8px]"><span data-fit class="w-[151px] pt-px">Add drill-through fields here</span></div>
  </aside>

  <!-- Data pane -->
  <aside class="w-[181px] border-l border-[#e1dfdd] bg-[#f3f2f1] flex flex-col">
    <div class="mt-[9px] h-5 flex items-center"><span data-fit class="ml-2 w-[34px] text-[15px] leading-5 font-semibold">Data</span><svg class="ml-[117px] w-[13px] h-[13px]" viewBox="0 0 13 13" fill="none" stroke="#484644" stroke-width="1.200"><path d="M.5.500l6 6-6 6M6.500.500l6 6-6 6"/></svg></div>
    <div class="ml-1 mt-4 w-[172px] h-6 rounded-[4px] border border-[#d2d0ce] border-b-[#605e5c] bg-white flex items-center pl-3 text-[13px] text-[#605e5c]">
      <svg class="w-[14px] h-[14px]" viewBox="0 0 14 14" fill="none" stroke="#605e5c" stroke-width="1.100"><circle cx="6" cy="5.700" r="5"/><path d="M9.600 9.300 14 13.500"/></svg>
      <span data-fit class="ml-[7px] w-[41px]">Search</span>
    </div>
    <div id="fields" class="mt-[9px] text-[#3b3a39]"></div>
  </aside>
</main>

<!-- Status bar -->
<footer class="h-6 border-t border-[#d8d6d4] bg-[#f3f2f1] flex items-center text-[#484644]">
  <span data-fit class="ml-1 mt-[2px] w-[59px]">Page 1 of 3</span>
  <svg class="ml-[812px] w-[124px] h-[13px]" viewBox="0 0 124 13" stroke="#605e5c"><path d="M1 6.500h4" stroke-width="1.800"/><path d="M10 6.500h100M60.500 3.500v6"/><path d="M42 1v11" stroke-width="4"/><path d="M116.500 6.500h7M120 3v7"/></svg>
  <span data-fit class="ml-[13px] w-[23px]">66%</span>
  <svg class="ml-[19px] w-4 h-3" viewBox="0 0 16 12" fill="none" stroke="#605e5c"><path d="M.5.500h15v11H.5z"/><path d="M3 4.500v-2h2M11 2.500h2v2M13 7.500v2h-2M5 9.500H3v-2"/></svg>
  <span data-fit class="ml-[14px] mt-[2px] w-[192px]">Update available (click to download)</span>
</footer>

<!-- Taskbar -->
<footer class="h-[41px] border-t border-black bg-[#464646] flex items-center text-white">
  <svg class="ml-4 w-4 h-4" viewBox="0 0 16 16" fill="#fff"><path d="M0 2.300 6.500 1.400v6.200H0zM7.300 1.300 16 0v7.600H7.300zM0 8.400h6.500v6.200L0 13.700zM7.300 8.400H16V16l-8.700-1.300z"/></svg>
  <div class="ml-4 w-[288px] h-10 bg-[#f2f2f2] border border-[#c8c8c8] flex items-center text-[#333]">
    <svg class="ml-[11px] w-4 h-[18px]" viewBox="0 0 16 18" fill="none" stroke="#252423" stroke-width="1.400"><circle cx="10" cy="6" r="5.200"/><path d="M6.500 10 .7 17"/></svg>
    <span data-fit class="ml-3 w-[128px] pt-px text-[14.500px] leading-5">Type here to search</span>
    <svg class="ml-[48px] w-[67px] h-9" viewBox="0 0 67 36"><defs><linearGradient id="ray" x1="0" x2="1"><stop offset="0" stop-color="#b9a9a0"/><stop offset=".4" stop-color="#cfc5c8"/><stop offset="1" stop-color="#747ba6"/></linearGradient></defs><path d="M4 17Q6 11 10 10l2-3 4 3q10 2 18-1 6 2 11 6l9 2q-8 4-12 10-6 6-16 5-6-6-14-8-6-3-8-7z" fill="url(#ray)"/><path d="M12 23q14 1 20-8-1 12-10 12-4-3-10-4z" fill="#eadfce"/><path d="M50 17q14 1 16-3 0-5-11-7" fill="none" stroke="#8286a2" stroke-width="1.600"/><ellipse cx="16" cy="15" rx="2.200" ry="1.300" fill="#2b2f4d"/><g fill="#b9ecf4" stroke="#c5a9e8"><circle cx="37.500" cy="5" r="3"/><circle cx="5.500" cy="26" r="3.500"/><circle cx="27" cy="6.500" r="1.300"/><circle cx="51" cy="30.500" r="2.300"/></g></svg>
  </div>
  <svg class="ml-4 w-4 h-4" viewBox="0 0 16 16"><circle cx="8" cy="8" r="6.800" fill="none" stroke="#fff" stroke-width="2"/></svg>
  <svg class="ml-8 w-4 h-[17px]" viewBox="0 0 16 17" fill="none" stroke="#fff" stroke-width="1.200"><path d="M.6 5.600h10v6.500H.6zM.6 0v3h10V0M.6 17v-3h10v3M14 0v3.500M14 8.500V17"/><path d="M13 4.500h2v3h-2z" fill="#fff" stroke="none"/></svg>
  <div class="ml-[23px] w-10 h-10 border-b-[3px] border-[#76b9ed] flex items-center justify-center"><svg class="w-[22px] h-5 mt-[3px]" viewBox="0 0 22 20"><path d="M0 0h8l2 2.500h12V7H0z" fill="#e8a317"/><path d="M0 4h22v15H0z" fill="#ffd868"/><path d="M4 11h14v9h-3.500v-4.500h-7V20H4z" fill="#3a96dd"/></svg></div>
  <div class="ml-[9px] w-10 h-10 border-b-[3px] border-[#76b9ed] flex items-center justify-center"><svg class="w-6 h-[26px] mt-[1px]" viewBox="0 0 24 26"><circle cx="12" cy="12" r="12" fill="#1685d0"/><path d="M1 8C4-2 20-3 23.500 8c1.500 6-3 9-8 8-3-1 0-3-1-6C12 5 4 4 1 8z" fill="#4fcf7f"/><path d="M1 8C4-2 16-2 20 3c-6-2-16-1-19 5z" fill="#35b8d8"/><path d="M14 10c-5-3-8 3-5 8 3 4 8 4 12 2-4 5-14 6-18-1C1 11 9 4 14 10z" fill="#0b559f"/><circle cx="6.500" cy="19.500" r="6" fill="#c8ccd0"/><circle cx="6.500" cy="17.500" r="2.200" fill="#666c72"/><path d="M2.500 23q4-5 8 0-4 3-8 0z" fill="#666c72"/></svg></div>
  <svg class="ml-[17px] w-6 h-6" viewBox="0 0 24 24"><path d="M1.500 22.500 3 16.800A10.500 10.500 0 1 1 7.200 21z" fill="#3f4a43" stroke="#25d366" stroke-width="2.200"/><path d="M8 6.500c.8-.6 1.300-.2 1.600.5l.9 2c.1.600-.5 1-.9 1.500 1 1.900 2.300 3 4 3.700.6-.4 1-1.400 1.600-1.200l2.300 1.200c.4 2-1.500 3.300-3.200 3-4-.9-7-4-7.600-7.500 0-1.400.4-2.500 1.300-3.200z" fill="#25d366"/></svg>
  <svg class="ml-[28px] w-[18px] h-[26px]" viewBox="0 0 18 26"><path d="M1.500 9.500Q9-1.500 16.500 9.500 9 4.500 1.500 9.500zM1.500 16Q9 27 16.500 16 9 21 1.500 16z" fill="#f37726"/><circle cx="15" cy="2" r="1.300" fill="#9e9e9e"/><circle cx="3" cy="24" r="1.500" fill="#9e9e9e"/></svg>
  <div class="ml-4 w-12 h-10 bg-[#707070] border-b-[3px] border-[#76b9ed] flex items-center justify-center"><svg class="w-5 h-[26px]" viewBox="0 0 20 26"><rect x="11" y="0" width="9" height="25" rx="1" fill="#e09a10"/><rect x="6" y="6" width="9" height="19" rx="1" fill="#f0b92a"/><rect x="1" y="12" width="8" height="13" rx="1" fill="#ffdf6b"/></svg></div>
  <svg class="ml-[170px] w-[23px] h-[26px]" viewBox="0 0 23 26" fill="#d83b13"><path d="M1 12h4v14H1zM7 18h4v8H7zM13 22h3v4h-3zM18 24h3v2h-3z"/><path d="M1 3q5 9 15 9" fill="none" stroke="#d83b13" stroke-width="2.500"/><path d="M17 7l5 4-2 7-7-2z" fill="#b5260c"/></svg>
  <span data-fit class="ml-[8px] w-[71px] text-[13.500px]">BSE midcap</span>
  <span data-fit class="ml-[10px] w-[42px] text-[13.500px] text-[#f0616d]">-0.94%</span>
  <svg class="ml-[25px] w-3 h-[7px]" viewBox="0 0 12 7" fill="none" stroke="#fff" stroke-width="1.300"><path d="M.5 6.500 6 1l5.500 5.500"/></svg>
  <svg class="ml-[12px] w-[13px] h-[19px]" viewBox="0 0 13 19" fill="none" stroke="#fff" stroke-width="1.200"><rect x="1" y="5" width="8" height="9" rx="1.500"/><path d="M9.500 8l2.500-1.500v6L9.500 11M2 2.500q4-3 8 0M2 16.500q4 3 8 0"/><path d="M3.500 7.500h3"/></svg>
  <svg class="ml-[9px] w-4 h-4" viewBox="0 0 16 16" fill="none" stroke="#fff" stroke-width="1.100"><path d="M5 3.500h10.500v8H3.500V7M9.500 11.500v3M6 15h7"/><path d="M.5 1.500h4v4h-4zM2.500 5.500v7"/></svg>
  <svg class="ml-2 w-[23px] h-[15px]" viewBox="0 0 23 15" fill="none" stroke="#fff"><rect x=".5" y="1" width="22" height="13"/><path d="M3 4.500h17M3 7.500h17" stroke-dasharray="2 1"/><path d="M3 10.500h2M6.500 10.500h10M18 10.500h2"/></svg>
  <div class="ml-[11px] w-[24px] flex flex-col items-center leading-[17px]"><span data-fit class="w-[23px]">ENG</span><span data-fit class="w-[12px]">IN</span></div>
  <div class="ml-[14px] w-[49px] flex flex-col items-center leading-[17px]"><span data-fit class="w-[48px]">12:51 PM</span><span data-fit class="w-[47px]">9/9/2024</span></div>
  <div class="ml-[19px] w-[26px] h-[30px] grid">
    <svg class="col-start-1 row-start-1 w-[26px] h-[30px]" viewBox="0 0 26 30"><path d="M1 6h16v12H7l-3 3v-3H1z" fill="#fff"/><path d="M3.500 9.500h11M3.500 12.500h11M3.500 15.500h8" stroke="#464646"/><circle cx="16.500" cy="21" r="8.500" fill="#464646" stroke="#8a8886"/></svg>
    <span class="col-start-1 row-start-1 ml-[11px] mt-[13px] text-[11px] font-semibold tracking-[-0.4px]">21</span>
  </div>
  <div class="ml-[11px] w-px h-10 bg-[#8a8886]"></div>
</footer>

<script>
const amber = 'bg-[#ecb40c]', red = 'bg-[#d64550]', blue = 'bg-[#118dff]', yellow = 'bg-[#f5cf14]';

const purchases = [
  ['Boston', 'Rural', '42,016.81', amber], ['Boston', 'Suburb', '53,835.98', amber], ['Boston', 'Urban', '50,595.51', amber],
  ['Los Angeles', 'Rural', '30,009.48', red], ['Los Angeles', 'Suburb', '82,419.92', blue], ['Los Angeles', 'Urban', '54,964.79', amber],
  ['New York', 'Rural', '69,444.55', blue], ['New York', 'Suburb', '46,284.58', amber], ['New York', 'Urban', '51,948.32', amber],
  ['Seattle', 'Rural', '43,228.34', amber], ['Seattle', 'Suburb', '83,749.20', blue], ['Seattle', 'Urban', '33,586.53', red],
];
const nameWidth = {
  'Boston': 'w-[46px]', 'Los Angeles': 'w-[78px]', 'New York': 'w-[62px]', 'Seattle': 'w-[45px]',
  'Rural': 'w-[34px]', 'Suburb': 'w-[48px]', 'Urban': 'w-[41px]',
};
document.getElementById('purchases').innerHTML = purchases.map(([city, setting, sum, tone], i) =>
  `<div class="h-[21.75px] flex items-center ${i % 2 ? 'bg-[#ededed]' : 'bg-white'}">
    <span class="w-[85.3px] pl-[3.500px]"><span data-fit class="block ${nameWidth[city]}">${city}</span></span><span class="w-[57.7px] pl-[3.500px]"><span data-fit class="block ${nameWidth[setting]}">${setting}</span></span>
    <span class="w-[140px] h-full pr-[3px] pt-px flex justify-end border-b border-white/40 ${tone}"><span data-fit class="w-[62.500px]">${sum}</span></span></div>`).join('');

const tones = {b: blue, r: red, y: yellow};
const matrix = [
  [7, '3,232.70', '2,343.82', '2,230.18', '7,806.70', 'byy'], [8, '1,485.23', '5,198.76', '3,380.07', '10,064.06', 'rbb'],
  [9, '2,181.19', '1,692.67', '1,631.93', '5,505.79', 'yyy'], [10, '866.29', '3,128.24', '3,016.29', '7,010.82', 'rbb'],
  [11, '1,834.96', '2,826.51', '1,712.76', '6,374.23', 'yyy'], [12, '815.53', '2,435.98', '2,547.73', '5,799.24', 'ryy'],
  [13, '1,916.92', '2,353.29', '2,158.33', '6,428.54', 'yyy'], [14, '2,282.82', '1,925.39', '2,305.94', '6,514.15', 'yyy'],
  [15, '2,590.77', '2,678.28', '336.36', '5,605.41', 'yyr'], [16, '2,267.56', '4,660.62', '2,437.52', '9,365.70', 'yby'],
  [17, '253.79', '2,962.89', '3,404.16', '6,620.84', 'ryb'], [18, '2,513.88', '4,417.54', '1,740.91', '8,672.33', 'yby'],
  [19, '2,094.33', '2,479.28', '1,477.14', '6,050.75', 'yyr'], [20, '3,370.44', '3,111.24', '3,621.95', '10,103.63', 'bbb'],
  [21, '756.32', '4,171.83', '1,313.52', '6,241.67', 'rbr'], [22, '1,571.70', '2,307.84', '1,718.32', '5,597.86', 'yyy'],
];
document.getElementById('matrix').innerHTML = matrix.map(([age, ...cells], i) => {
  const total = cells[3], key = cells[4];
  const body = cells.slice(0, 3).map((v, c) =>
    `<span class="w-[76px] h-full pr-[2px] pt-px flex justify-end border-b border-r border-white/25 ${tones[key[c]]}"><span data-fit class="${v.length > 6 ? 'w-[54.500px]' : 'w-[43px]'}">${v}</span></span>`).join('');
  return `<div class="h-[21.1px] flex ${i % 2 ? 'bg-[#ededed]' : 'bg-white'}">
    <span class="w-[28.5px] h-full pl-[3px] text-[9.2px] leading-[14px] tracking-[-0.2px] border-r border-[#4a90c8]">${age}</span>${body}
    <span class="w-[84px] pr-[2.500px] pt-px flex justify-end text-[14.3px] font-bold"><span data-fit class="${total.length > 8 ? 'w-[68px]' : 'w-[60px]'}">${total}</span></span></div>`;
}).join('');

const sigma = '<svg class="w-[11px] h-[13px]" viewBox="0 0 11 13" fill="none" stroke="#252423" stroke-width="1.200"><path d="M10.500 2.500V.7H.8l5.700 5.600L.8 12.300h9.700v-2"/></svg>';
const calendar = '<svg class="w-3 h-3" viewBox="0 0 12 12" fill="none" stroke="#252423" stroke-width="1.100"><rect x=".6" y=".6" width="10.800" height="10.800" rx="2"/><path d="M.6 3.500h10.800"/><path d="M3 6h6.500M3 8.500h4.500" stroke-dasharray="1.300 1.200"/></svg>';
const table = '<svg class="w-3 h-3" viewBox="0 0 12 12" fill="none" stroke="#252423" stroke-width="1.100"><rect x=".6" y=".6" width="10.800" height="10.800" rx="2"/><path d="M.6 4h10.800M.6 8h10.800M4 .6v10.800M8 .6v10.800"/></svg>';
const right = '<svg class="w-[7px] h-3" viewBox="0 0 7 12" fill="none" stroke="#797775" stroke-width="1.100"><path d="M.5.500 6.300 6 .5 11.500"/></svg>';
const down = '<svg class="w-3 h-[7px]" viewBox="0 0 12 7" fill="none" stroke="#797775" stroke-width="1.100"><path d="M.5.500 6 6l5.500-5.500"/></svg>';
const head = (arrow, name, w) => `<div class="h-6 flex items-center"><span class="ml-[13px] w-[16px] flex ${arrow === right ? 'pl-[2px]' : ''}">${arrow}</span>${table}<span data-fit class="ml-[6px] mt-px ${w}">${name}</span></div>`;
const fields = [
  ['Academic Books', 'w-[87px]', sigma], ['Age', 'w-[21px]', sigma], ['Exchange', 'w-[50px]', ''], ['Gadgets', 'w-[44px]', sigma],
  ['InDoor SportKits', 'w-[88px]', sigma], ['NonAcademic ...', 'w-[86px]', sigma], ['Number of Ite...', 'w-[83px]', sigma],
  ['OutDoor Sport...', 'w-[87px]', sigma], ['Store Location', 'w-[76px]', ''], ['Store Number', 'w-[74px]', sigma],
  ['Store Setting', 'w-[68px]', ''], ['Survey Date', 'w-[63px]', calendar], ['Survey ID', 'w-[50px]', sigma],
  ['Total Amount o...', 'w-[90px]', sigma], ['Toys', 'w-[23px]', sigma], ['VideoGames', 'w-[67px]', sigma],
];
document.getElementById('fields').innerHTML = head(down, 'Student Survey', 'w-[80px]') +
  fields.map(([name, w, icon]) => `<div class="h-6 flex items-center">
    <span class="ml-[30px] w-[14px]">${icon === calendar ? right : ''}</span><i class="w-3 h-3 border border-[#797775] rounded-[2px]"></i>
    <span class="ml-2 w-3 flex justify-center">${icon}</span><span data-fit class="ml-[6px] mt-px ${w}">${name}</span></div>`).join('') +
  head(right, 'User Mappings', 'w-[80px]');

// Space the letters of each label so that it fills its own box, and again whenever the box changes.
const fit = el => {
  el.style.letterSpacing = '0px';
  const range = document.createRange();
  range.selectNodeContents(el);
  const spare = el.getBoundingClientRect().width - range.getBoundingClientRect().width;
  el.style.letterSpacing = (spare / el.textContent.length).toFixed(3) + 'px';
};
const labels = document.querySelectorAll('[data-fit]');
const observer = new ResizeObserver(entries => entries.forEach(e => fit(e.target)));
labels.forEach(el => observer.observe(el));
addEventListener('load', () => labels.forEach(fit));
</script>
</body>
</html>
